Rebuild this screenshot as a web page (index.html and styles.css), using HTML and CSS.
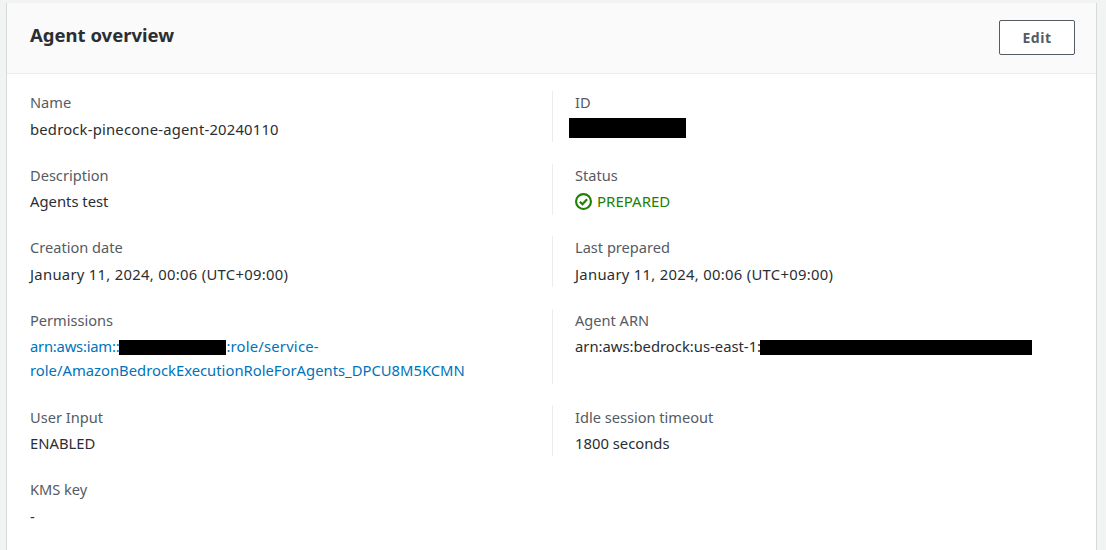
FILE: index.html
```html
<!DOCTYPE html>
<html>
<head>
    <title>Agent overview</title>
    <link rel="stylesheet" href="styles.css">
</head>
<body>
    <div class="card">
        <div class="card-header">
            <h2>Agent overview</h2>
            <button type="button" class="edit-btn">Edit</button>
        </div>
        <div class="details">
            <div class="item">
                <div class="label">Name</div>
                <div class="value digits">bedrock-pinecone-agent-20240110</div>
            </div>
            <div class="item divided">
                <div class="label">ID</div>
                <div class="value"><span class="redact-id"></span></div>
            </div>
            <div class="item">
                <div class="label">Description</div>
                <div class="value">Agents test</div>
            </div>
            <div class="item divided">
                <div class="label">Status</div>
                <div class="value status">
                    <svg class="status-icon" viewBox="0 0 16 16" width="17" height="17">
                        <circle cx="8" cy="8" r="7" fill="none" stroke="#1d8102" stroke-width="2"/>
                        <path d="M4.6 8.2l2.4 2.4 4.4-4.8" fill="none" stroke="#1d8102" stroke-width="2"/>
                    </svg>
                    PREPARED
                </div>
            </div>
            <div class="item">
                <div class="label">Creation date</div>
                <div class="value date">January 11, 2024, 00:06 (UTC+09:00)</div>
            </div>
            <div class="item divided">
                <div class="label">Last prepared</div>
                <div class="value date">January 11, 2024, 00:06 (UTC+09:00)</div>
            </div>
            <div class="item tall">
                <div class="label">Permissions</div>
                <div class="value"><a href="#"><span class="arn-start">arn:aws:iam::</span><span class="redact redact-account"></span><span class="arn-end">:role/service-</span><br>role/AmazonBedrockExecutionRoleForAgents_DPCU8M5KCMN</a></div>
            </div>
            <div class="item divided tall">
                <div class="label">Agent ARN</div>
                <div class="value">arn:aws:bedrock:us-east-1:<span class="redact redact-arn"></span></div>
            </div>
            <div class="item">
                <div class="label">User Input</div>
                <div class="value">ENABLED</div>
            </div>
            <div class="item divided">
                <div class="label">Idle session timeout</div>
                <div class="value">1800 seconds</div>
            </div>
            <div class="item">
                <div class="label">KMS key</div>
                <div class="value">-</div>
            </div>
        </div>
    </div>
</body>
</html>
```

FILE: styles.css
```css
body {
    font-family: "Noto Sans", Arial, sans-serif;
    font-size: 14.8px;
    color: #2a2e33;
    background-color: #f2f3f3;
    margin: 0;
    padding: 3px 9px 0 6px;
    height: 550px;
    box-sizing: border-box;
    overflow: hidden;
}
.card {
    background-color: #fff;
    height: 547px;
    border-left: 1px solid #d5dbdb;
    border-right: 1px solid #d5dbdb;
    overflow: hidden;
}
.card-header {
    display: flex;
    justify-content: space-between;
    align-items: flex-start;
    height: 70px;
    padding: 0 21px 0 23px;
    background-color: #fafafa;
    border-bottom: 1px solid #eaeded;
}
.card-header h2 {
    margin: 17px 0 0;
    font-size: 18.5px;
    line-height: 30px;
    font-weight: 700;
}
.edit-btn {
    width: 76px;
    height: 35px;
    margin-top: 17px;
    font-family: inherit;
    font-size: 14px;
    font-weight: 700;
    letter-spacing: 0.5px;
    color: #545b64;
    background-color: #fff;
    border: 1px solid #545b64;
    border-radius: 2px;
}
.details {
    display: grid;
    grid-template-columns: 522px 1fr;
    row-gap: 21.5px;
    padding: 17px 23px 0;
}
.item {
    min-height: 51px;
}
.item.tall {
    min-height: 75.2px;
}
.item.divided {
    border-left: 1px solid #eaeded;
    padding-left: 22px;
}
.label {
    color: #545b64;
    font-size: 14.6px;
    line-height: 24px;
    margin-top: -0.6px;
}
.value {
    line-height: 24px;
    margin-top: 2.5px;
}
.digits {
    letter-spacing: 0.2px;
}
.date {
    letter-spacing: 0.3px;
}
.value a {
    color: #0073bb;
    text-decoration: none;
}
.arn-start {
    letter-spacing: -0.23px;
}
.arn-end {
    letter-spacing: 0.2px;
}
.status {
    display: flex;
    align-items: center;
    gap: 5px;
    color: #1d8102;
    font-size: 15px;
}
.status-icon {
    flex: none;
}
.redact {
    display: inline-block;
    height: 15px;
    background-color: #000;
    vertical-align: -3px;
}
.redact-id {
    display: block;
    width: 117px;
    height: 20px;
    margin: 3.5px 0 0 -6px;
    background-color: #000;
}
.redact-account {
    width: 107px;
}
.redact-arn {
    width: 272px;
    margin-left: -1px;
}
```
